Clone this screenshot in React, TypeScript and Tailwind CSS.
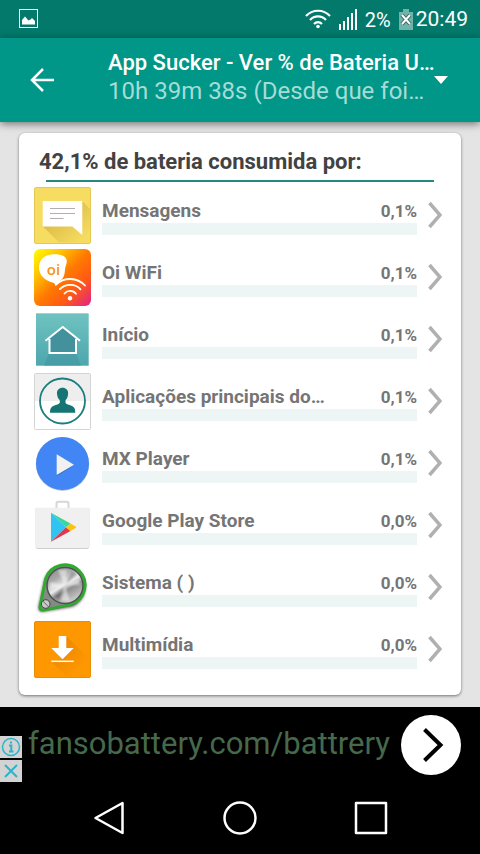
import type { ReactNode } from "react";

interface AppUsage {
  name: string;
  percent: string;
  icon: ReactNode;
}

const MessagesIcon = () => (
  <svg viewBox="0 0 57 57" className="size-full" aria-hidden="true">
    <defs>
      <linearGradient id="bubble-shadow" x1="0.3" y1="0.3" x2="0.9" y2="0.9">
        <stop offset="0" stopColor="#dcbc45" />
        <stop offset="1" stopColor="#f7dc62" />
      </linearGradient>
    </defs>
    <rect x="0.5" y="0.5" width="56" height="56" rx="1.5" fill="#f7dc62" stroke="#e3c858" />
    <path d="M9 39.500 25 55.500h31V22l-7.500-7.500Z" fill="url(#bubble-shadow)" />
    <path d="M8.700 14h39.600v34l-10-8.500H8.700Z" fill="#fff" />
    <path d="M16 21.500h25M16 26.500h25M16 31.500h13.500" stroke="#b5aeb0" strokeWidth="1" />
  </svg>
);

const OiIcon = () => (
  <svg viewBox="0 0 57 57" className="size-full" aria-hidden="true">
    <defs>
      <linearGradient id="oi" x1="0" y1="0" x2="1" y2="1">
        <stop offset="0" stopColor="#ffff00" />
        <stop offset="0.25" stopColor="#ffc400" />
        <stop offset="0.5" stopColor="#ff7a00" />
        <stop offset="0.72" stopColor="#ff5a14" />
        <stop offset="1" stopColor="#e0218a" />
      </linearGradient>
    </defs>
    <rect width="57" height="57" rx="6" fill="url(#oi)" />
    <path d="M13 6.500C18 4.500 27 4.500 31 8c3.500 4 1 7 .2 11C30.500 24 31 28 26.500 31.500L21.500 37c-.5-2-1-3-3-3.500C10 31 5.500 26 5 19.500 4.700 13 8 8.500 13 6.500Z" fill="#fff" />
    <text x="19.500" y="26" textAnchor="middle" fontFamily="Open Sans, sans-serif" fontWeight="600" fontSize="15" fill="#f7941d">oi</text>
    <g fill="none" stroke="#fff" strokeWidth="1.800" strokeLinecap="round">
      <path d="M22 35.500C30 28 43 28 51 36.500" />
      <path d="M26 40c5.500-5.500 15.500-5.500 20.500.3" />
      <path d="M30.500 44.500c3-3.500 8.500-3.500 11.500.2" />
    </g>
    <circle cx="36" cy="49.300" r="2.200" fill="#fff" />
  </svg>
);

const HomeIcon = () => (
  <svg viewBox="0 0 57 57" className="size-full" aria-hidden="true">
    <defs>
      <linearGradient id="home" x1="0" y1="0" x2="0" y2="1">
        <stop offset="0" stopColor="#6fc2c0" />
        <stop offset="1" stopColor="#4da7ae" />
      </linearGradient>
    </defs>
    <rect x="2" y="2.300" width="52.700" height="52.400" fill="url(#home)" />
    <path d="M15 42 10 54.700h37L42 42Z" fill="#3f929e" opacity="0.5" />
    <path d="M15 27 28.700 16 42 27v15H15Z" fill="#43919d" />
    <path d="M11.500 29.700 28.700 16 46 29.700M15.500 28v14h26.500V28" fill="none" stroke="#fff" strokeWidth="2" />
  </svg>
);

const PeopleIcon = () => (
  <svg viewBox="0 0 57 57" className="size-full" aria-hidden="true">
    <rect x="0.500" y="0.500" width="56" height="56" fill="#fff" />
    <path d="M1 1h55v27H1Z" fill="#eee" />
    <rect x="0.500" y="0.500" width="56" height="56" rx="1" fill="none" stroke="#d4d4d4" />
    <circle cx="28.500" cy="28" r="22.500" fill="none" stroke="#1b7d7d" strokeWidth="1.800" />
    <path d="M28.500 14.700c-3.600 0-5.800 2.500-5.500 6 .2 3 1.300 5.200 2.800 6.500v2.600c-.8 1.500-3.500 2-6 3-2.800 1.200-3.800 3-3.800 7h25.300c0-4-1-5.800-3.800-7-2.500-1-5.500-1.500-6-3v-2.600c1.500-1.300 2.400-3.500 2.600-6.500.3-3.500-2-6-5.600-6Z" fill="#167474" />
  </svg>
);

const PlayerIcon = () => (
  <svg viewBox="0 0 57 57" className="size-full" aria-hidden="true">
    <circle cx="28.500" cy="29.200" r="26.700" fill="#bfc6d4" />
    <circle cx="28.500" cy="28.500" r="26.500" fill="#4285f4" />
    <path d="M22.700 41v-2L40 30.500Z" fill="#356ac3" />
    <path d="M22.700 19.300V40l17.300-10.300Z" fill="#f1f1f1" />
  </svg>
);

const PlayStoreIcon = () => (
  <svg viewBox="0 0 57 57" className="size-full" aria-hidden="true">
    <path d="M22.500 11V6.500c0-1.200.6-1.800 1.800-1.800h8.400c1.200 0 1.800.6 1.800 1.800V11" fill="none" stroke="#d6d6d6" strokeWidth="2" />
    <path d="M1.700 11h53.600v38a3 3 0 0 1-3 3H4.700a3 3 0 0 1-3-3Z" fill="#c4c4c4" />
    <path d="M1.700 10.700h53.600v37.600a3 3 0 0 1-3 3H4.700a3 3 0 0 1-3-3Z" fill="#f0f0f0" />
    <path d="M17 15.700v29L32 30.300Z" fill="#2fc4f2" />
    <path d="M17 15.700 32 30.300l4.500-3.700Z" fill="#3bd79a" />
    <path d="M17 44.700 32 30.300l4.500 3.700Z" fill="#e0394d" />
    <path d="m36.500 26.600 5.500 3.100v1L36.500 34 32 30.300Z" fill="#fdc116" />
  </svg>
);

const SystemIcon = () => (
  <svg viewBox="0 0 57 57" className="size-full" aria-hidden="true">
    <defs>
      <linearGradient id="steel" x1="0.200" y1="0" x2="0.800" y2="1">
        <stop offset="0" stopColor="#8b8b8b" />
        <stop offset="0.250" stopColor="#a9a9a9" />
        <stop offset="0.480" stopColor="#ededed" />
        <stop offset="0.620" stopColor="#8e8e8e" />
        <stop offset="1" stopColor="#dedede" />
      </linearGradient>
      <filter id="shade" x="-20%" y="-20%" width="140%" height="140%">
        <feGaussianBlur stdDeviation="1.500" />
      </filter>
      <filter id="soft" x="-20%" y="-20%" width="140%" height="140%">
        <feGaussianBlur stdDeviation="1.200" />
      </filter>
    </defs>
    <path d="M11.500 21A20 20 0 1 1 38 46.500L9 51.500c-3 .5-4-1.500-3.300-4Z" fill="#222" stroke="#333" strokeWidth="2" filter="url(#shade)" />
    <path d="M11.500 20A20.300 20.300 0 1 1 37 45.500L9.500 51c-3 .5-4-1.200-3.400-3.600Z" fill="#858a85" stroke="#2cab2c" strokeWidth="2.800" />
    <circle cx="31" cy="26.500" r="18" fill="url(#steel)" stroke="#4d524d" strokeWidth="1.500" />
    <g filter="url(#soft)">
      <path d="M31 26.500 24 11h9ZM31 26.500 45 20l1 6Z" fill="#fff" opacity="0.500" />
      <path d="M31 26.500 16 23v7ZM31 26.500 27 42h9Z" fill="#fff" opacity="0.500" />
      <path d="M31 26.500 43 15l-5-3ZM31 26.500 20 37l5 4Z" fill="#333" opacity="0.300" />
    </g>
    <circle cx="11.700" cy="45" r="4.300" fill="#c9c9c9" stroke="#444" />
    <path d="m11.700 45-3-3M11.700 45l3 3" stroke="#666" />
  </svg>
);

const DownloadIcon = () => (
  <svg viewBox="0 0 57 57" className="size-full" aria-hidden="true">
    <defs>
      <linearGradient id="arrow-shadow" x1="0.200" y1="0.200" x2="0.800" y2="0.800">
        <stop offset="0" stopColor="#ee8700" />
        <stop offset="1" stopColor="#ff9800" />
      </linearGradient>
    </defs>
    <rect x="0.500" y="0.500" width="56" height="56" rx="1.500" fill="#ff9800" stroke="#e88c0c" />
    <path d="M32.300 15 56 39v17H33L17.500 40.500l11-3Z" fill="url(#arrow-shadow)" />
    <path d="M24.700 15h7.600v12h7.400L28.500 38.300 17.300 27h7.400Z" fill="#fff" />
    <path d="M17.300 40.300h22.400" stroke="#fff" strokeWidth="1.500" />
  </svg>
);

const apps: AppUsage[] = [
  { name: "Mensagens", percent: "0,1%", icon: <MessagesIcon /> },
  { name: "Oi WiFi", percent: "0,1%", icon: <OiIcon /> },
  { name: "Início", percent: "0,1%", icon: <HomeIcon /> },
  { name: "Aplicações principais do…", percent: "0,1%", icon: <PeopleIcon /> },
  { name: "MX Player", percent: "0,1%", icon: <PlayerIcon /> },
  { name: "Google Play Store", percent: "0,0%", icon: <PlayStoreIcon /> },
  { name: "Sistema ( )", percent: "0,0%", icon: <SystemIcon /> },
  { name: "Multimídia", percent: "0,0%", icon: <DownloadIcon /> },
];

const StatusBar = () => (
  <div className="flex h-[38px] items-center bg-[#02796b] pl-[19px] pr-3 text-white">
    <svg viewBox="0 0 20 20" className="size-5" aria-hidden="true">
      <rect x="0.500" y="0.500" width="18" height="18" fill="none" stroke="#fff" />
      <path d="M3 15.500v-4.500l3-3.500 3.500 4 2-1 1.500-1.500 3 3v3.500Z" fill="#fff" />
    </svg>
    <div className="ml-auto flex items-center">
      <svg viewBox="0 0 26 20" className="h-5 w-[26px]" aria-hidden="true">
        <g fill="none" stroke="#fff" strokeWidth="2.200">
          <path d="M1 7c6.500-7 17.500-7 24 0" />
          <path d="M5 11c4.500-4.800 11.500-4.800 16 0" />
          <path d="M9 15c2.400-2.500 5.600-2.500 8 0" />
        </g>
        <circle cx="13" cy="17.500" r="1.800" fill="#fff" />
      </svg>
      <svg viewBox="0 0 18 21" className="ml-2 h-[21px] w-[18px]" fill="#fff" aria-hidden="true">
        <path d="M0 15h2v6H0ZM4 12h2v9H4ZM8 8h2v13H8ZM12 4h2v17h-2ZM16 0h2v21h-2Z" />
      </svg>
      <span className="ml-2 pt-[2px] text-xl">2%</span>
      <svg viewBox="0 0 14 21" className="ml-2 h-[21px] w-[14px]" aria-hidden="true">
        <path d="M4 0h6v3h4v18H0V3h4Z" fill="#6fb3aa" />
        <path d="m3 6 8 9M11 6l-8 9" stroke="#33685f" strokeWidth="4" />
        <path d="m3 6 8 9M11 6l-8 9" stroke="#fff" strokeWidth="2" />
      </svg>
      <span className="ml-[3px] pt-[2px] text-[21px]">20:49</span>
    </div>
  </div>
);

const Toolbar = () => (
  <header className="relative flex h-21 items-center bg-[#009688] pl-[30px] pr-8 text-white shadow-[0_2px_8px_rgba(0,0,0,0.5)]">
    <button type="button" aria-label="Voltar" className="shrink-0">
      <svg viewBox="0 0 24 24" className="size-6" fill="none" stroke="#fff" strokeWidth="2.500" aria-hidden="true">
        <path d="M13 1 2 12l11 11M1.500 12H24" />
      </svg>
    </button>
    <button type="button" className="ml-[54px] flex min-w-0 flex-1 items-center text-left">
      <span className="min-w-0 flex-1 pb-[7px] whitespace-nowrap">
        <span className="block text-[22px] leading-7 font-medium">App Sucker - Ver % de Bateria U…</span>
        <span className="block text-2xl leading-7 text-[#a6dcd6]">10h 39m 38s (Desde que foi…</span>
      </span>
      <svg viewBox="0 0 14 8" className="h-2 w-[14px] shrink-0" fill="#fff" aria-hidden="true">
        <path d="M0 0h14L7 8Z" />
      </svg>
    </button>
  </header>
);

const AppRow = ({ name, percent, icon }: AppUsage) => (
  <li>
    <button type="button" className="flex h-[62px] w-full items-center text-left">
      <span className="size-[57px] shrink-0">{icon}</span>
      <span className="ml-[11px] flex-1">
        <span className="flex items-center justify-between pt-1 leading-6 font-bold text-[#757575]">
          <span className="text-[19px]">{name}</span>
          <span className="text-[17px]">{percent}</span>
        </span>
        <span className="block h-3 bg-[#edf6f5]" />
      </span>
      <svg viewBox="0 0 14 28" className="mr-1 ml-[11px] h-7 w-[14px]" fill="none" stroke="#b0b0b0" strokeWidth="3.500" aria-hidden="true">
        <path d="m1.500 2 10.500 12-10.500 12" />
      </svg>
    </button>
  </li>
);

const AdBanner = () => (
  <aside className="flex h-[75px] items-center bg-black">
    <div className="flex shrink-0 flex-col gap-[2px] self-end">
      <button type="button" aria-label="Informações do anúncio" className="grid size-[22px] place-items-center bg-[#d3d3d3]">
        <svg viewBox="0 0 20 20" className="size-5" fill="none" stroke="#2bb3cb" aria-hidden="true">
          <circle cx="10" cy="10" r="8.500" strokeWidth="1.500" />
          <path d="M10 4.500v2M8 8.500h2.300v6M8 14.500h4.500" strokeWidth="2" />
        </svg>
      </button>
      <button type="button" aria-label="Fechar anúncio" className="grid size-[22px] place-items-center bg-[#d3d3d3]">
        <svg viewBox="0 0 20 20" className="size-5" stroke="#2bb3cb" strokeWidth="2" aria-hidden="true">
          <path d="m4 4 12 12M16 4 4 16" />
        </svg>
      </button>
    </div>
    <a href="#ad" className="flex flex-1 items-center justify-between pl-[6px] pr-[19px] text-[31px] text-[#46694b]">
      fansobattery.com/battrery
      <svg viewBox="0 0 60 60" className="size-15 shrink-0" aria-hidden="true">
        <circle cx="30" cy="30" r="30" fill="#fff" />
        <path d="m23.500 14.500 16 15.500-16 15.500" fill="none" stroke="#000" strokeWidth="4" />
      </svg>
    </a>
  </aside>
);

const NavBar = () => (
  <nav className="flex h-18 items-center justify-center gap-[97px] bg-black">
    <button type="button" aria-label="Voltar">
      <svg viewBox="0 0 34 34" className="size-[34px]" fill="none" stroke="#fff" strokeWidth="2.500" strokeLinejoin="round" aria-hidden="true">
        <path d="M30.500 2v30L3.500 17Z" />
      </svg>
    </button>
    <button type="button" aria-label="Tela inicial">
      <svg viewBox="0 0 34 34" className="size-[34px]" fill="none" stroke="#fff" strokeWidth="2.500" aria-hidden="true">
        <circle cx="17" cy="17" r="15.500" />
      </svg>
    </button>
    <button type="button" aria-label="Recentes">
      <svg viewBox="0 0 34 34" className="size-[34px]" fill="none" stroke="#fff" strokeWidth="2.500" strokeLinejoin="round" aria-hidden="true">
        <path d="M2 2h30v30H2Z" />
      </svg>
    </button>
  </nav>
);

export default function App() {
  return (
    <div className="flex min-h-screen flex-col bg-black font-[Roboto,sans-serif]">
      <StatusBar />
      <Toolbar />

      <main className="flex-1 bg-[#e4e4e4] px-[19px] pt-[11px] pb-3">
        <section className="rounded-md bg-white px-[15px] pt-[13px] pb-[15px] shadow-[0_1px_3px_rgba(0,0,0,0.5)]">
          <h1 className="pl-[5px] text-[22px] leading-8 font-bold text-[#424242]">42,1% de bateria consumida por:</h1>
          <div className="mx-3 my-[2px] h-[2px] bg-[#26877f]" />
          <ul>
            {apps.map((app) => (
              <AppRow key={app.name} {...app} />
            ))}
          </ul>
        </section>
      </main>

      <AdBanner />
      <NavBar />
    </div>
  );
}
